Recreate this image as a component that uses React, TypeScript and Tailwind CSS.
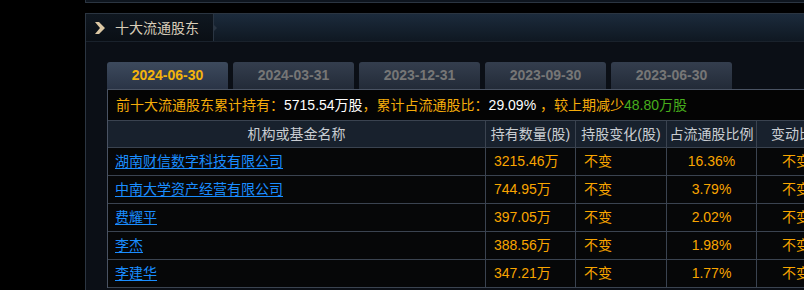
import React from "react";

const font = { fontFamily: '"Liberation Sans", "Noto Sans CJK SC", sans-serif' };

const tabs = ["2024-06-30", "2024-03-31", "2023-12-31", "2023-09-30", "2023-06-30"];

const rows = [
  { name: "湖南财信数字科技有限公司", qty: "3215.46万", chg: "不变", pct: "16.36%", r: "不变" },
  { name: "中南大学资产经营有限公司", qty: "744.95万", chg: "不变", pct: "3.79%", r: "不变" },
  { name: "费耀平", qty: "397.05万", chg: "不变", pct: "2.02%", r: "不变" },
  { name: "李杰", qty: "388.56万", chg: "不变", pct: "1.98%", r: "不变" },
  { name: "李建华", qty: "347.21万", chg: "不变", pct: "1.77%", r: "不变" },
];

const grid = "grid grid-cols-[378px_90px_91px_90px_90px]";
const cell = "border-r border-b border-[#3a4350] flex items-center whitespace-nowrap overflow-hidden";

export default function App() {
  return (
    <div className="w-[804px] h-[290px] bg-black overflow-hidden text-[14px]" style={font}>
      {/* previous panel bottom */}
      <div className="ml-[85px] h-[3px] bg-[#0e151e] border-l border-b border-[#2b3541]" />
      <div className="h-[10px]" />
      {/* panel */}
      <div className="ml-[85px] border-l border-t border-[#2b3541] bg-[#0b0f16] h-[300px]">
        {/* header */}
        <div className="h-[28px] flex border-b border-[#1a222c] bg-gradient-to-b from-[#1c2b3c] to-[#0f1822]">
          <div className="relative w-[128px] h-full flex items-center bg-gradient-to-b from-[#0f1720] to-[#0a0f15] border-r border-[#2a3542]">
            <svg className="ml-[9px]" width="10" height="12" viewBox="0 0 10 12">
              <polygon points="0,0 4,0 10,6 4,12 0,12 5,6" fill="#dcc8a4" />
            </svg>
            <span className="ml-[10px] text-[14px] leading-[16px] text-[#d8cdb8]">十大流通股东</span>
            <div className="absolute right-[-4px] top-[10px] w-0 h-0 border-t-[4px] border-b-[4px] border-l-[4px] border-t-transparent border-b-transparent border-l-[#2a3542]" />
          </div>
        </div>
        {/* body */}
        <div className="pl-[21px] pt-[20px]">
          <div className="flex gap-[5px] h-[27px]">
            {tabs.map((t, i) => (
              <div
                key={t}
                className={
                  "w-[121px] h-full rounded-t-[3px] flex items-center justify-center text-[14px] font-bold " +
                  (i === 0
                    ? "bg-gradient-to-b from-[#3d4a5d] to-[#2a3446] text-[#f4b40c]"
                    : "bg-gradient-to-b from-[#343e4e] to-[#232b38] text-[#767676]")
                }
              >
                {t}
              </div>
            ))}
          </div>
          <div className="border-l border-t border-[#4a5363]">
            <div className="h-[31px] bg-[#040404] border-b border-[#3a4350] flex items-center pl-[8px] whitespace-nowrap text-[14px] text-[#f5ac0a]">
              <span>前十大流通股东累计持有：</span>
              <span className="text-white">5715.54万股</span>
              <span>，累计占流通股比：</span>
              <span className="text-white">29.09%</span>
              <span>&nbsp;，较上期减少</span>
              <span className="text-[#47ae1c]">48.80万股</span>
            </div>
            <div className={grid + " h-[27px] bg-[#18212d] text-[#c9cdd2]"}>
              {["机构或基金名称", "持有数量(股)", "持股变化(股)", "占流通股比例", "变动比例"].map((h, i) => (
                <div key={h} className={cell + (i === 4 ? " justify-start pl-[14px]" : " justify-center")}>
                  {h}
                </div>
              ))}
            </div>
            {rows.map((r) => (
              <div key={r.name} className={grid + " h-[28px] bg-[#060708]"}>
                <div className={cell + " pl-[7px]"}>
                  <span className="text-[#1a8dff] underline underline-offset-2">{r.name}</span>
                </div>
                <div className={cell + " pl-[8px] text-[#f9a500]"}>{r.qty}</div>
                <div className={cell + " pl-[8px] text-[#f9a500]"}>{r.chg}</div>
                <div className={cell + " justify-center text-[#f9a500]"}>{r.pct}</div>
                <div className={cell + " pl-[25px] text-[#f9a500]"}>{r.r}</div>
              </div>
            ))}
          </div>
        </div>
      </div>
    </div>
  );
}
